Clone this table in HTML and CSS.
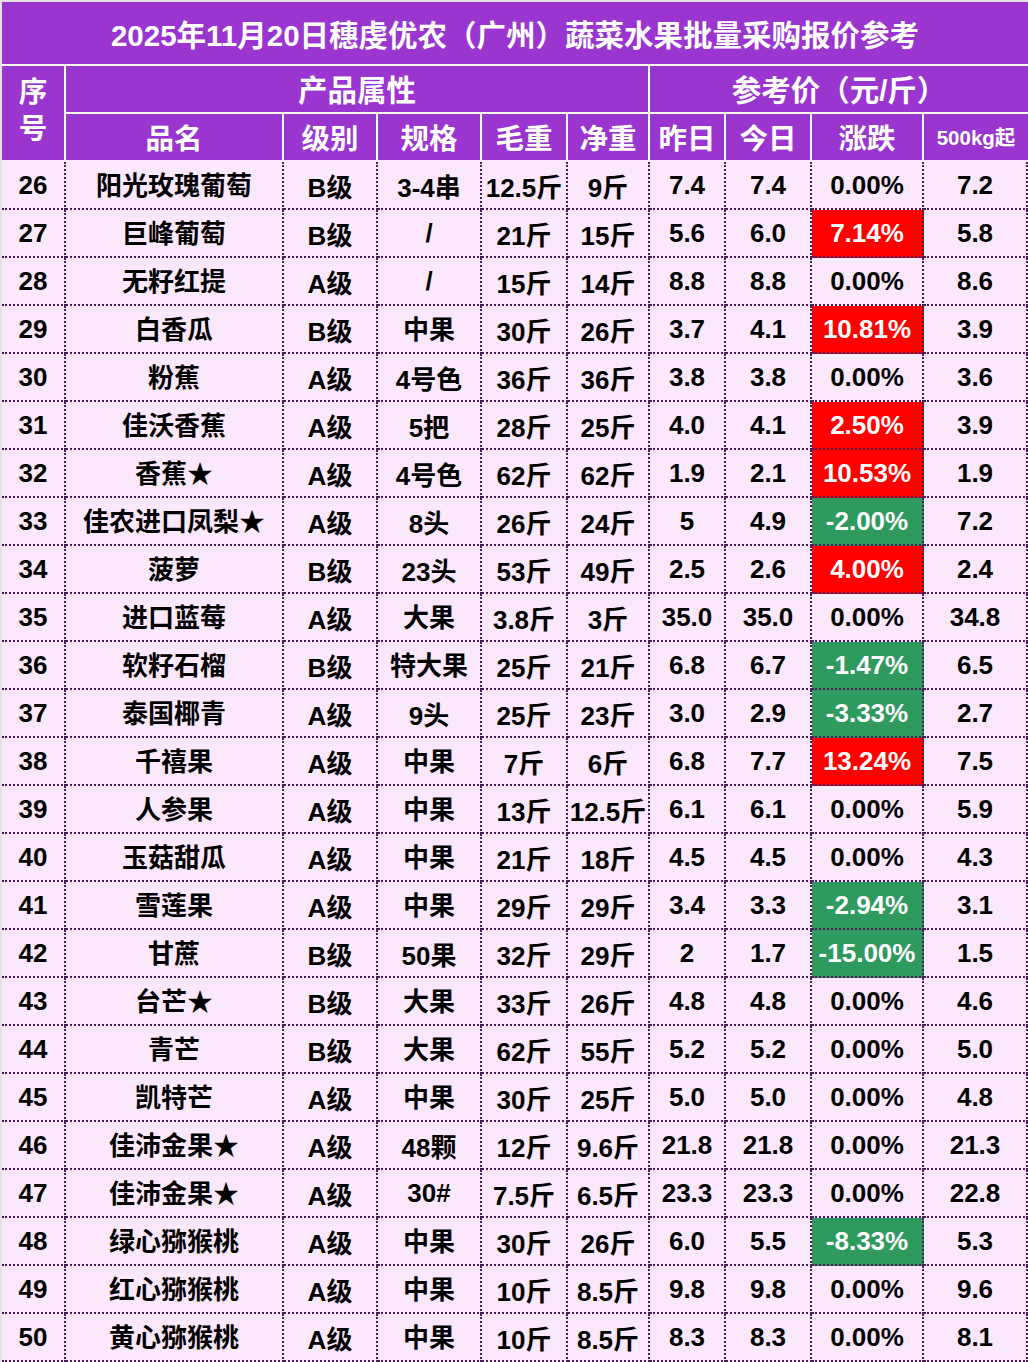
FILE: index.html
```html
<!DOCTYPE html>
<html lang="zh-CN">
<head>
<meta charset="utf-8">
<title>报价参考</title>
<link rel="stylesheet" href="styles.css">
</head>
<body>
<div class="sheet">
  <div class="h title">2025年11月20日穗虔优农（广州）蔬菜水果批量采购报价参考</div>
  <div class="h seq">序<br>号</div>
  <div class="h grp1">产品属性</div>
  <div class="h grp2 last">参考价（元/斤）</div>
  <div class="h h2">品名</div>
  <div class="h h2">级别</div>
  <div class="h h2">规格</div>
  <div class="h h2">毛重</div>
  <div class="h h2">净重</div>
  <div class="h h2">昨日</div>
  <div class="h h2">今日</div>
  <div class="h h2">涨跌</div>
  <div class="h h2 last small">500kg起</div>

  <div class="c">26</div><div class="c n">阳光玫瑰葡萄</div><div class="c">B级</div><div class="c">3-4串</div><div class="c">12.5斤</div><div class="c">9斤</div><div class="c">7.4</div><div class="c">7.4</div><div class="c">0.00%</div><div class="c">7.2</div>
  <div class="c">27</div><div class="c n">巨峰葡萄</div><div class="c">B级</div><div class="c">/</div><div class="c">21斤</div><div class="c">15斤</div><div class="c">5.6</div><div class="c">6.0</div><div class="c up">7.14%</div><div class="c">5.8</div>
  <div class="c">28</div><div class="c n">无籽红提</div><div class="c">A级</div><div class="c">/</div><div class="c">15斤</div><div class="c">14斤</div><div class="c">8.8</div><div class="c">8.8</div><div class="c">0.00%</div><div class="c">8.6</div>
  <div class="c">29</div><div class="c n">白香瓜</div><div class="c">B级</div><div class="c n">中果</div><div class="c">30斤</div><div class="c">26斤</div><div class="c">3.7</div><div class="c">4.1</div><div class="c up">10.81%</div><div class="c">3.9</div>
  <div class="c">30</div><div class="c n">粉蕉</div><div class="c">A级</div><div class="c">4号色</div><div class="c">36斤</div><div class="c">36斤</div><div class="c">3.8</div><div class="c">3.8</div><div class="c">0.00%</div><div class="c">3.6</div>
  <div class="c">31</div><div class="c n">佳沃香蕉</div><div class="c">A级</div><div class="c">5把</div><div class="c">28斤</div><div class="c">25斤</div><div class="c">4.0</div><div class="c">4.1</div><div class="c up">2.50%</div><div class="c">3.9</div>
  <div class="c">32</div><div class="c n">香蕉★</div><div class="c">A级</div><div class="c">4号色</div><div class="c">62斤</div><div class="c">62斤</div><div class="c">1.9</div><div class="c">2.1</div><div class="c up">10.53%</div><div class="c">1.9</div>
  <div class="c">33</div><div class="c n">佳农进口凤梨★</div><div class="c">A级</div><div class="c">8头</div><div class="c">26斤</div><div class="c">24斤</div><div class="c">5</div><div class="c">4.9</div><div class="c down">-2.00%</div><div class="c">7.2</div>
  <div class="c">34</div><div class="c n">菠萝</div><div class="c">B级</div><div class="c">23头</div><div class="c">53斤</div><div class="c">49斤</div><div class="c">2.5</div><div class="c">2.6</div><div class="c up">4.00%</div><div class="c">2.4</div>
  <div class="c">35</div><div class="c n">进口蓝莓</div><div class="c">A级</div><div class="c n">大果</div><div class="c">3.8斤</div><div class="c">3斤</div><div class="c">35.0</div><div class="c">35.0</div><div class="c">0.00%</div><div class="c">34.8</div>
  <div class="c">36</div><div class="c n">软籽石榴</div><div class="c">B级</div><div class="c n">特大果</div><div class="c">25斤</div><div class="c">21斤</div><div class="c">6.8</div><div class="c">6.7</div><div class="c down">-1.47%</div><div class="c">6.5</div>
  <div class="c">37</div><div class="c n">泰国椰青</div><div class="c">A级</div><div class="c">9头</div><div class="c">25斤</div><div class="c">23斤</div><div class="c">3.0</div><div class="c">2.9</div><div class="c down">-3.33%</div><div class="c">2.7</div>
  <div class="c">38</div><div class="c n">千禧果</div><div class="c">A级</div><div class="c n">中果</div><div class="c">7斤</div><div class="c">6斤</div><div class="c">6.8</div><div class="c">7.7</div><div class="c up">13.24%</div><div class="c">7.5</div>
  <div class="c">39</div><div class="c n">人参果</div><div class="c">A级</div><div class="c n">中果</div><div class="c">13斤</div><div class="c">12.5斤</div><div class="c">6.1</div><div class="c">6.1</div><div class="c">0.00%</div><div class="c">5.9</div>
  <div class="c">40</div><div class="c n">玉菇甜瓜</div><div class="c">A级</div><div class="c n">中果</div><div class="c">21斤</div><div class="c">18斤</div><div class="c">4.5</div><div class="c">4.5</div><div class="c">0.00%</div><div class="c">4.3</div>
  <div class="c">41</div><div class="c n">雪莲果</div><div class="c">A级</div><div class="c n">中果</div><div class="c">29斤</div><div class="c">29斤</div><div class="c">3.4</div><div class="c">3.3</div><div class="c down">-2.94%</div><div class="c">3.1</div>
  <div class="c">42</div><div class="c n">甘蔗</div><div class="c">B级</div><div class="c">50果</div><div class="c">32斤</div><div class="c">29斤</div><div class="c">2</div><div class="c">1.7</div><div class="c down">-15.00%</div><div class="c">1.5</div>
  <div class="c">43</div><div class="c n">台芒★</div><div class="c">B级</div><div class="c n">大果</div><div class="c">33斤</div><div class="c">26斤</div><div class="c">4.8</div><div class="c">4.8</div><div class="c">0.00%</div><div class="c">4.6</div>
  <div class="c">44</div><div class="c n">青芒</div><div class="c">B级</div><div class="c n">大果</div><div class="c">62斤</div><div class="c">55斤</div><div class="c">5.2</div><div class="c">5.2</div><div class="c">0.00%</div><div class="c">5.0</div>
  <div class="c">45</div><div class="c n">凯特芒</div><div class="c">A级</div><div class="c n">中果</div><div class="c">30斤</div><div class="c">25斤</div><div class="c">5.0</div><div class="c">5.0</div><div class="c">0.00%</div><div class="c">4.8</div>
  <div class="c">46</div><div class="c n">佳沛金果★</div><div class="c">A级</div><div class="c">48颗</div><div class="c">12斤</div><div class="c">9.6斤</div><div class="c">21.8</div><div class="c">21.8</div><div class="c">0.00%</div><div class="c">21.3</div>
  <div class="c">47</div><div class="c n">佳沛金果★</div><div class="c">A级</div><div class="c">30#</div><div class="c">7.5斤</div><div class="c">6.5斤</div><div class="c">23.3</div><div class="c">23.3</div><div class="c">0.00%</div><div class="c">22.8</div>
  <div class="c">48</div><div class="c n">绿心猕猴桃</div><div class="c">A级</div><div class="c n">中果</div><div class="c">30斤</div><div class="c">26斤</div><div class="c">6.0</div><div class="c">5.5</div><div class="c down">-8.33%</div><div class="c">5.3</div>
  <div class="c">49</div><div class="c n">红心猕猴桃</div><div class="c">A级</div><div class="c n">中果</div><div class="c">10斤</div><div class="c">8.5斤</div><div class="c">9.8</div><div class="c">9.8</div><div class="c">0.00%</div><div class="c">9.6</div>
  <div class="c">50</div><div class="c n">黄心猕猴桃</div><div class="c">A级</div><div class="c n">中果</div><div class="c">10斤</div><div class="c">8.5斤</div><div class="c">8.3</div><div class="c">8.3</div><div class="c">0.00%</div><div class="c">8.1</div>
</div>
</body>
</html>
```
FILE: styles.css
```css
html, body {
  margin: 0;
  padding: 0;
  background: #e4e4e4;
}
body {
  padding: 2px 0 0 2px;
  font-family: "Liberation Sans", "Noto Sans CJK SC", sans-serif;
  font-weight: 700;
}
.sheet {
  width: 1026px;
  display: grid;
  grid-template-columns: 64px 218px 94px 104px 86px 82px 76px 86px 112px 104px;
  grid-template-rows: 64px 48px 48px;
  grid-auto-rows: 48px;
  background: #fce8fc;
}
.h, .c {
  box-sizing: border-box;
  display: flex;
  align-items: center;
  justify-content: center;
  white-space: nowrap;
  text-align: center;
}
.h {
  background: #9a35d0;
  color: #fff;
  font-size: 28.5px;
  border-right: 2px solid #fff;
  border-bottom: 2px solid #fff;
  padding-bottom: 2px;
}
.h.last { border-right: none; }
.title {
  grid-column: 1 / -1;
  font-size: 29.5px;
  border-right: none;
  padding-bottom: 0;
}
.seq {
  grid-row: 2 / 4;
  line-height: 37px;
  padding-bottom: 4px;
  border-bottom-color: #fce8fc;
}
.grp1 { grid-column: 2 / 7; font-size: 29.5px; }
.grp2 { grid-column: 7 / 11; font-size: 29.5px; }
.h2 {
  border-bottom-color: #fce8fc;
}
.small { font-size: 20.5px; }
.c {
  color: #000;
  font-size: 26px;
  border-right: 2px dotted #4a1c58;
  border-bottom: 2px dotted #4a1c58;
  padding-top: 1px;
}
.c.n {
  padding-top: 0;
  padding-bottom: 3px;
}
.c.up {
  background: #ff0000;
  color: #fff;
}
.c.down {
  background: #2e9a5e;
  color: #fff;
}
```
